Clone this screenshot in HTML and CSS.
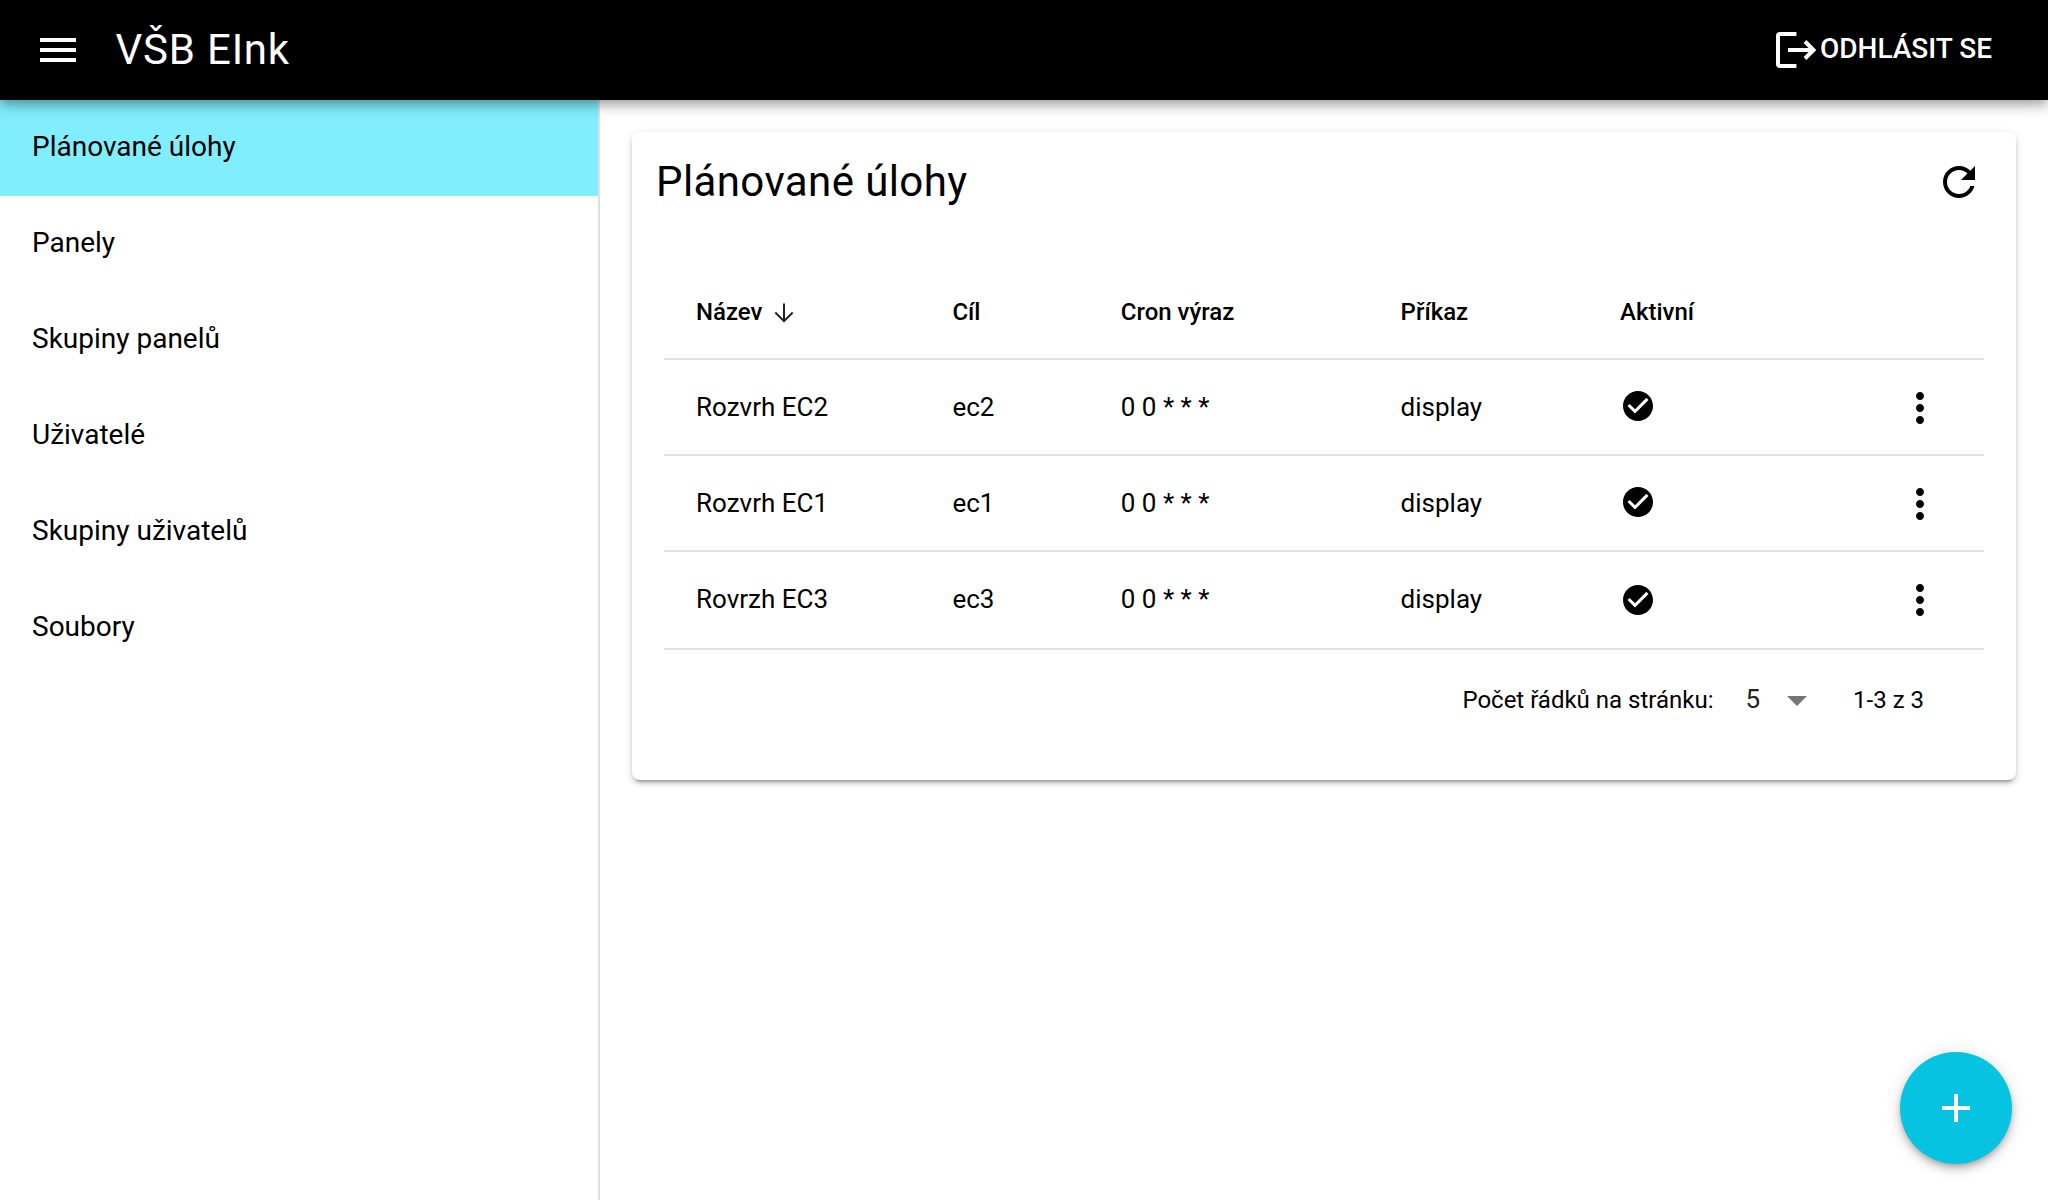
FILE: index.html
```html
<!DOCTYPE html>
<html lang="cs">
<head>
<meta charset="utf-8">
<title>VŠB EInk</title>
<link rel="stylesheet" href="styles.css">
</head>
<body>
<header class="top-bar">
  <svg class="icon-lg" viewBox="0 0 24 24"><path d="M3 18h18v-2H3v2zm0-5h18v-2H3v2zm0-7v2h18V6H3z"/></svg>
  <h1 class="app-title">VŠB EInk</h1>
  <button class="logout">
    <svg class="icon-logout" viewBox="0 0 41 36"><path d="M20.400 2H4q-2 0-2 2v28q0 2 2 2h16.400M12 18h25M29 9.500l8.500 8.500-8.500 8.500"/></svg>
    <span class="logout-label">ODHLÁSIT SE</span>
  </button>
</header>
<div class="layout">
  <nav class="drawer">
    <a class="nav-item active">Plánované úlohy</a>
    <a class="nav-item">Panely</a>
    <a class="nav-item">Skupiny panelů</a>
    <a class="nav-item">Uživatelé</a>
    <a class="nav-item">Skupiny uživatelů</a>
    <a class="nav-item">Soubory</a>
  </nav>
  <main class="content">
    <section class="card">
      <div class="card-head">
        <h2 class="card-title">Plánované úlohy</h2>
        <svg class="icon-lg" viewBox="0 0 24 24"><path d="M17.650 6.350C16.200 4.900 14.210 4 12 4c-4.420 0-7.990 3.580-7.990 8s3.570 8 7.990 8c3.730 0 6.840-2.550 7.730-6h-2.080c-.82 2.330-3.040 4-5.650 4-3.310 0-6-2.690-6-6s2.690-6 6-6c1.660 0 3.140.69 4.220 1.780L13 11h7V4l-2.350 2.350z"/></svg>
      </div>
      <div class="table">
        <div class="row head">
          <span class="sorted">Název<svg class="icon-sort" viewBox="0 0 28 28"><path d="M14 4.500V22M5.300 13.500l8.700 8.700 8.700-8.700"/></svg></span>
          <span>Cíl</span><span>Cron výraz</span><span>Příkaz</span><span>Aktivní</span>
        </div>
        <div class="row">
          <span>Rozvrh EC2</span><span>ec2</span><span>0 0 * * *</span><span>display</span>
          <svg class="icon-check" viewBox="0 0 24 24"><path d="M12 2C6.480 2 2 6.480 2 12s4.480 10 10 10 10-4.480 10-10S17.520 2 12 2zm-2 15l-5-5 1.410-1.410L10 14.170l7.590-7.590L19 8l-9 9z"/></svg>
          <svg class="icon-lg" viewBox="0 0 24 24"><path d="M12 8c1.100 0 2-.9 2-2s-.9-2-2-2-2 .9-2 2 .9 2 2 2zm0 2c-1.100 0-2 .9-2 2s.9 2 2 2 2-.9 2-2-.9-2-2-2zm0 6c-1.100 0-2 .9-2 2s.9 2 2 2 2-.9 2-2-.9-2-2-2z"/></svg>
        </div>
        <div class="row">
          <span>Rozvrh EC1</span><span>ec1</span><span>0 0 * * *</span><span>display</span>
          <svg class="icon-check" viewBox="0 0 24 24"><path d="M12 2C6.480 2 2 6.480 2 12s4.480 10 10 10 10-4.480 10-10S17.520 2 12 2zm-2 15l-5-5 1.410-1.410L10 14.170l7.590-7.590L19 8l-9 9z"/></svg>
          <svg class="icon-lg" viewBox="0 0 24 24"><path d="M12 8c1.100 0 2-.9 2-2s-.9-2-2-2-2 .9-2 2 .9 2 2 2zm0 2c-1.100 0-2 .9-2 2s.9 2 2 2 2-.9 2-2-.9-2-2-2zm0 6c-1.100 0-2 .9-2 2s.9 2 2 2 2-.9 2-2-.9-2-2-2z"/></svg>
        </div>
        <div class="row last">
          <span>Rovrzh EC3</span><span>ec3</span><span>0 0 * * *</span><span>display</span>
          <svg class="icon-check" viewBox="0 0 24 24"><path d="M12 2C6.480 2 2 6.480 2 12s4.480 10 10 10 10-4.480 10-10S17.520 2 12 2zm-2 15l-5-5 1.410-1.410L10 14.170l7.590-7.590L19 8l-9 9z"/></svg>
          <svg class="icon-lg" viewBox="0 0 24 24"><path d="M12 8c1.100 0 2-.9 2-2s-.9-2-2-2-2 .9-2 2 .9 2 2 2zm0 2c-1.100 0-2 .9-2 2s.9 2 2 2 2-.9 2-2-.9-2-2-2zm0 6c-1.100 0-2 .9-2 2s.9 2 2 2 2-.9 2-2-.9-2-2-2z"/></svg>
        </div>
      </div>
      <div class="pagination">
        <span>Počet řádků na stránku:</span>
        <span class="page-size"><span class="page-size-value">5</span><svg class="icon-drop" viewBox="7 10 10 5"><path d="M7 10l5 5 5-5z"/></svg></span>
        <span>1-3 z 3</span>
      </div>
    </section>
  </main>
</div>
<button class="fab"><svg class="icon-lg" viewBox="0 0 24 24"><path d="M19 13h-6v6h-2v-6H5v-2h6V5h2v6h6v2z"/></svg></button>
</body>
</html>
```
FILE: styles.css
```css
* { box-sizing: border-box; }

body {
  margin: 0;
  height: 1200px;
  display: flex;
  flex-direction: column;
  overflow: hidden;
  background: #fff;
  color: #000;
  font-family: Roboto, "Noto Sans", sans-serif;
}

h1, h2 { margin: 0; font-weight: 400; }
svg { display: block; flex: none; fill: currentColor; }
button { border: 0; padding: 0; font: inherit; color: inherit; background: none; }

.icon-lg { width: 48px; height: 48px; }

.top-bar {
  position: relative;
  z-index: 1;
  flex: none;
  height: 100px;
  padding: 0 56px 0 33.500px;
  display: flex;
  align-items: center;
  background: #000;
  color: #fff;
  box-shadow: 0 4px 8px -2px rgba(0,0,0,.2), 0 8px 10px rgba(0,0,0,.14), 0 2px 20px rgba(0,0,0,.12);
  clip-path: inset(0 0 -20px 0);
}
.app-title { margin-left: 34px; font-size: 42px; line-height: 50px; letter-spacing: .8px; }
.logout { margin-left: auto; display: flex; align-items: center; gap: 3px; font-size: 28px; line-height: 36px; font-weight: 500; }
.logout-label { padding-bottom: 2px; }
.icon-logout { width: 41px; height: 36px; fill: none; stroke: currentColor; stroke-width: 4; }

.layout { flex: 1; display: flex; min-height: 0; }
.drawer { width: 600px; flex: none; border-right: 2px solid #e0e0e0; }
.nav-item { height: 96px; padding: 0 32px 2px; display: flex; align-items: center; font-size: 28px; line-height: 40px; }
.nav-item.active { background: #80eefd; }

.content { flex: 1; padding: 32px; }
.card {
  height: 648px;
  border-radius: 8px;
  background: #fff;
  box-shadow: 0 6px 2px -4px rgba(0,0,0,.2), 0 4px 4px rgba(0,0,0,.14), 0 2px 10px rgba(0,0,0,.12);
}
.card-head { height: 116px; padding: 0 33.500px 16px 24px; display: flex; align-items: center; justify-content: space-between; }
.card-title { font-size: 42px; line-height: 50px; letter-spacing: .4px; }

.table { margin: 0 32px; }
.row {
  height: 96px;
  padding: 2px 0 0 32px;
  display: grid;
  grid-template-columns: 256.400px 168.400px 279.800px 219.400px 276px 48px;
  align-items: center;
  border-bottom: 2px solid #e0e0e0;
  font-size: 26px;
  line-height: 40px;
}
.row > span { margin-bottom: 2px; }
.row.head { height: 112px; padding-top: 20px; font-size: 24px; font-weight: 500; }
.row.last { height: 98px; padding-bottom: 2px; }
.sorted { display: flex; align-items: center; gap: 8px; }
.icon-sort { width: 28px; height: 28px; margin-top: 2px; fill: none; stroke: #222; stroke-width: 2; }
.icon-check { width: 36px; height: 36px; margin-bottom: 4px; }
.last .icon-check { margin-bottom: 0; }

.pagination { height: 100px; padding-right: 92px; display: flex; align-items: center; justify-content: flex-end; font-size: 24px; line-height: 36px; }
.page-size { margin: 0 46.500px 0 32px; display: flex; align-items: center; gap: 26.500px; font-size: 26px; color: #212121; }
.page-size-value { padding-bottom: 2px; }
.icon-drop { width: 20px; height: 10px; margin-top: 2px; color: #757575; }

.fab {
  position: absolute;
  right: 36px;
  bottom: 36px;
  width: 112px;
  height: 112px;
  border-radius: 50%;
  display: grid;
  place-items: center;
  background: #06c3e1;
  color: #fff;
  box-shadow: 0 3px 5px -1px rgba(0,0,0,.2), 0 6px 10px rgba(0,0,0,.14), 0 1px 18px rgba(0,0,0,.12);
}
```
